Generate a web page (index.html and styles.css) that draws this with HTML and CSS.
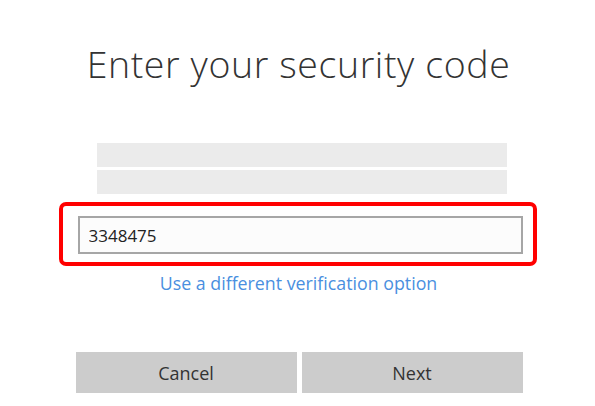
FILE: index.html
```html
<!DOCTYPE html>
<html lang="en">
<head>
    <meta charset="UTF-8">
    <meta name="viewport" content="width=device-width, initial-scale=1.0">
    <title>Enter your security code</title>
    <link rel="stylesheet" href="styles.css">
</head>
<body>
    <main class="page">
        <h1 class="title">Enter your security code</h1>

        <div class="masked">
            <div class="masked-line"></div>
            <div class="masked-line"></div>
        </div>

        <div class="highlight">
            <input class="code-input" type="text" value="3348475">
        </div>

        <a href="#" class="alt-link">Use a different verification option</a>

        <div class="actions">
            <button class="btn">Cancel</button>
            <button class="btn">Next</button>
        </div>
    </main>
</body>
</html>
```

FILE: styles.css
```css
body {
    margin: 0;
    background-color: #fff;
    font-family: "Open Sans", "Noto Sans", sans-serif;
    color: #333;
}

.page {
    display: flex;
    flex-direction: column;
    align-items: center;
    padding-top: 39px;
}

.title {
    margin: 0 0 0 2px;
    font-size: 37.5px;
    line-height: 50px;
    letter-spacing: 0.6px;
    font-weight: 300;
    color: #333;
}

.masked {
    display: flex;
    flex-direction: column;
    gap: 3px;
    margin: 54px 0 0 9px;
}

.masked-line {
    width: 410px;
    height: 24px;
    background-color: #ebebeb;
}

.highlight {
    margin-top: 8px;
    width: 478px;
    box-sizing: border-box;
    border: 4px solid #f00;
    border-radius: 7px;
    padding: 10px 10px 8px 15px;
}

.code-input {
    display: block;
    width: 445px;
    height: 38px;
    box-sizing: border-box;
    border: 2px solid #a6a6a6;
    background-color: #fcfcfc;
    padding: 0 9px;
    font-family: inherit;
    font-size: 17px;
    color: #222;
    outline: none;
}

.alt-link {
    margin: 5px 0 0 2px;
    font-size: 17.8px;
    line-height: 24px;
    color: #4a8fe0;
    text-decoration: none;
}

.actions {
    display: flex;
    gap: 5px;
    margin: 57px 0 0 3px;
}

.btn {
    width: 221px;
    height: 41px;
    border: none;
    background-color: #cccccc;
    font-family: inherit;
    font-size: 18px;
    color: #333;
    padding: 0;
}
```
